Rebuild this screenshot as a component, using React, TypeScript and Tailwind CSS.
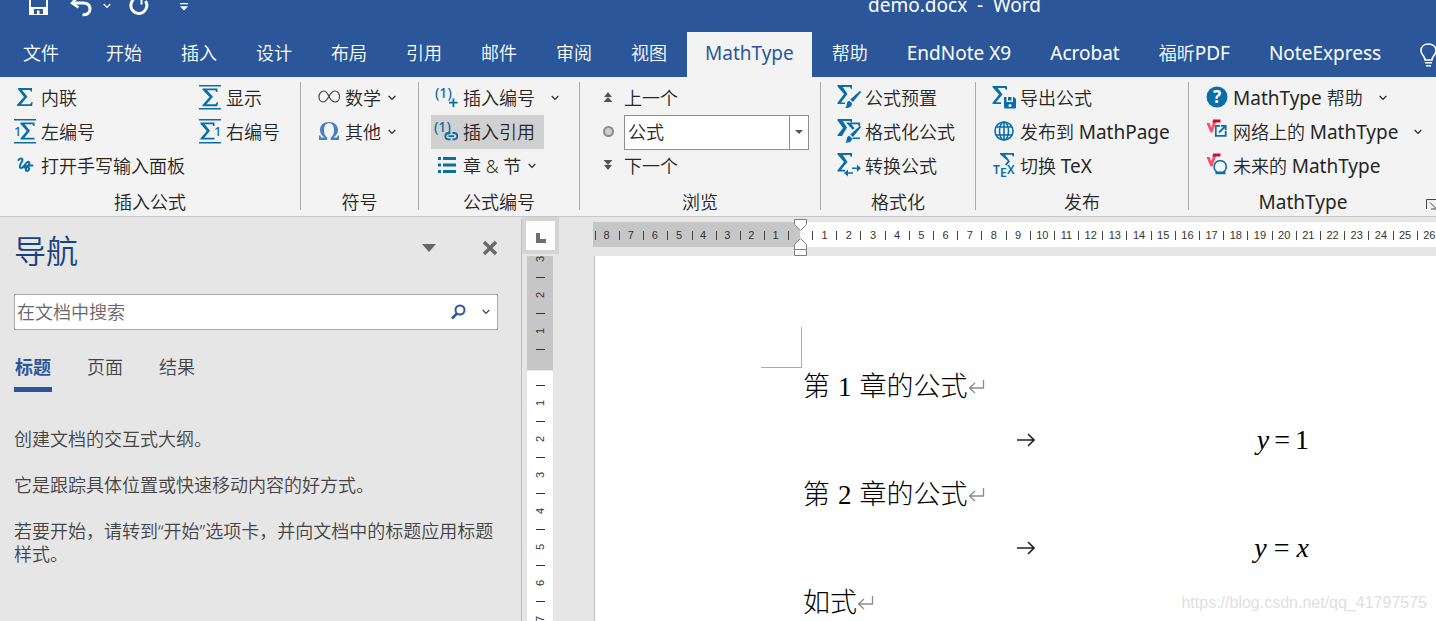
import { Fragment, type ReactNode } from "react";
import clsx from "clsx";

const BLUE = "#0a6ea8";

const tabs = [
  "开始",
  "插入",
  "设计",
  "布局",
  "引用",
  "邮件",
  "审阅",
  "视图",
  "MathType",
  "帮助",
  "EndNote X9",
  "Acrobat",
  "福昕PDF",
  "NoteExpress",
];

const marginNumbers = [8, 7, 6, 5, 4, 3, 2, 1];
const textNumbers = Array.from({ length: 26 }, (_, i) => i + 1);

function Icon({ children }: { children: ReactNode }) {
  return (
    <svg width="24" height="24" viewBox="0 0 24 24" className="shrink-0 overflow-visible" fill={BLUE} aria-hidden="true">
      {children}
    </svg>
  );
}

function Chevron({ className }: { className?: string }) {
  return (
    <svg width="8" height="6" viewBox="0 0 8 6" fill="none" stroke="currentColor" strokeWidth="1.2" className={clsx("shrink-0", className)} aria-hidden="true">
      <path d="M.7 1 4 4.3 7.3 1" />
    </svg>
  );
}

const SIGMA = "M5 2h14v3.5h-1.2L17 4H9l5.5 6.8L8 18.2h9.2l1.3-2.2h1.3L19 20H4v-1.2l7-7.8-6-7.8z";
const SMALL_SIGMA = "M0 0h14v3.6h-1.2L12 1.8H4.2l5.3 6.4-5.6 7H14V17H0v-1.2L6.3 8.6 0 1.4z";

const InlineIcon = () => (
  <Icon>
    <path d={SIGMA} />
  </Icon>
);

const DisplayIcon = () => (
  <Icon>
    <path d="M1-1h22V.5H1zM1 22h22v1.500H1z" />
    <path d="M4.500 2.500h15V6h-1.300l-.8-1.700H9l6 6.400-6.500 7.500h9l1.300-2h1.300l-.8 4H4.500V19l7-8-7-7.300z" />
  </Icon>
);

const LeftNumberIcon = () => (
  <Icon>
    <path d="M1-1h22V.5H1zM1 22h22v1.500H1z" />
    <path transform="translate(7.500 2.500)" d={SMALL_SIGMA} />
    <text x="1" y="15.500" fontSize="13" fontWeight="500">1</text>
  </Icon>
);

const RightNumberIcon = () => (
  <Icon>
    <path d="M1-1h22V.5H1zM1 22h22v1.500H1z" />
    <path transform="translate(2.500 2.500)" d={SMALL_SIGMA} />
    <text x="16" y="15.500" fontSize="13" fontWeight="500">1</text>
  </Icon>
);

const HandwritingIcon = () => (
  <Icon>
    <path
      d="M5.500 6C8 3.500 10.500 4.500 9 7.500c-1.500 2.500-3.500 5-1.500 6.500 3 1 4.500-4.500 7-6 2-.8 2.500 1 1 3-1.500 2-3.500 3.500-2.500 5.500 2 1.500 4-1.500 2.500-3.500-1-1.300-3.500-1-4 .5M15.500 11.500h4"
      fill="none"
      stroke={BLUE}
      strokeWidth="2"
      strokeLinecap="round"
    />
  </Icon>
);

const InfinityIcon = () => (
  <Icon>
    <path
      d="M12 10.500C10.500 7 9 5 6.500 5 4 5 2 7.800 2 10.800c0 2.800 1.700 5.200 4 5.200 5.500 0 6-11 12-11 2.500 0 4.500 2.500 4.500 5.500S20.700 16 18.200 16c-3 0-4.700-2.500-6.200-5.500z"
      fill="none"
      stroke="#444"
      strokeWidth="1.200"
    />
  </Icon>
);

const OmegaIcon = () => (
  <Icon>
    <path
      fill="#4a80bd"
      d="M2 20v-4.500h1.300l.7 2h3.500C4.300 15.300 3 13 3 10c0-4.700 3.500-8 9-8s9 3.300 9 8c0 3-1.300 5.300-4.500 7.500H20l.7-2H22V20h-8.200v-2.500c2.200-1.400 3.200-4 3.200-7.500 0-4.200-1.800-6.700-5-6.700S7 5.800 7 10c0 3.600 1 6.100 3.200 7.500V20z"
    />
  </Icon>
);

const NumberPlusIcon = () => (
  <Icon>
    <text x="0" y="12" fontSize="14" fontWeight="500">(1)</text>
    <path d="M17.500 12.500h1.800v3.300h3.400v1.800h-3.400V21h-1.800v-3.400H14v-1.800h3.500z" />
  </Icon>
);

const NumberLinkIcon = () => (
  <Icon>
    <text x="-1" y="12" fontSize="14" fontWeight="500">(1)</text>
    <g fill="none" stroke={BLUE} strokeWidth="1.800">
      <path d="M15.500 13h-2a3.200 3.200 0 0 0 0 6.400h2M17.500 13h1.500a3.200 3.200 0 0 1 0 6.400h-1.500M13.500 16.200h5.500" />
    </g>
  </Icon>
);

const ListIcon = () => (
  <Icon>
    <path d="M3 3h3v3H3zM8 3h13v3H8zM3 9.500h3v3H3zM8 9.500h13v3H8zM3 16h3v3H3zM8 16h13v3H8z" />
  </Icon>
);

const PreviousIcon = () => (
  <Icon>
    <path fill="#555" d="M12 6l4 5H8zM12 11l4.500 5h-9z" />
  </Icon>
);

const TargetIcon = () => (
  <Icon>
    <circle cx="12.500" cy="11.500" r="4.500" fill="#cdcdcd" stroke="#8a8a8a" strokeWidth="2" />
  </Icon>
);

const NextIcon = () => (
  <Icon>
    <path fill="#555" d="M7.500 6h9L12 11zM8 11h8l-4 5z" />
  </Icon>
);

const PresetIcon = () => (
  <Icon>
    <path d="M.5-1H15v3.800h-1.300L13 .9H5.800l4.700 7L4 16.500h4V18H.5v-1.300L7 8 .5.500z" />
    <path d="M22.500 5.200c1.200-.8 2 .4 1.200 1.400L16 16l-2.800-2.500zM12.300 14.800l2.700 2.400c0 3-2 5-7 4.800 2-1.500 1.300-3 2-5 .5-1.300 1.300-2 2.300-2.200z" />
  </Icon>
);

const FormatIcon = () => (
  <Icon>
    <path d="M.5-1H15v3h-1.300L13 .9H5.800L10 7.500 5 16H.5v-1L6 8 .5.500z" />
    <path d="M9 2.500h14V6h-1.200L21 4.200h-6.500l3 4-1.800 1.600zM16 17.500h7V19h-8z" />
    <path d="M22.500 6.200c1.200-.8 2 .4 1.200 1.400L16 17l-2.800-2.500zM12.300 15.800l2.700 2.400c0 3-2 5-7 4.300 2-1 1.300-2.500 2-4.500.5-1.300 1.300-2 2.300-2.200z" />
  </Icon>
);

const ConvertIcon = () => (
  <Icon>
    <path d="M.5-1H15v3.800h-1.300L13 .9H5.800l4.700 7L4 15.800h4v1.700H.5v-1.300L7 8 .5.500z" />
    <path d="M15 13.500h5v-2.700l4 3.500-4 3.500v-2.700h-5zM16 18.200h-5v-2.700L7 19l4 3.500v-2.700h5z" />
  </Icon>
);

const ExportIcon = () => (
  <Icon>
    <path d="M.5 0H15v3.800h-1.300L13 1.900H5.800l4.700 6.600L4 16.300h5V18H.5v-1.300L7 8.600.5 1.300z" />
    <path d="M12 11h2.500v5H21v-5h1l2 2v8.500a1 1 0 0 1-1 1H13a1 1 0 0 1-1-1z" />
    <path d="M16 11h3.500v3.500H16z" />
    <circle cx="18" cy="19.500" r="1.500" fill="#f3f3f3" />
  </Icon>
);

const GlobeIcon = () => (
  <Icon>
    <g fill="none" stroke={BLUE} strokeWidth="1.600">
      <circle cx="12" cy="11" r="9" />
      <ellipse cx="12" cy="11" rx="4.500" ry="9" />
      <path d="M12 2v18M4 7h16M4 15h16" />
    </g>
  </Icon>
);

const TexIcon = () => (
  <Icon>
    <path d="M8-1h14v3.500h-1.200L20 .7h-7l5 6.800-3.500 4-1.500-1 2.800-3.500L8 .3z" />
    <text x="1" y="20" fontSize="12" fontWeight="600">T</text>
    <text x="8" y="23" fontSize="12" fontWeight="600">E</text>
    <text x="15" y="20" fontSize="12" fontWeight="600">X</text>
  </Icon>
);

const HelpIcon = () => (
  <Icon>
    <circle cx="12" cy="11" r="10.500" />
    <text x="12" y="17" fontSize="17" fontWeight="700" fill="#fff" textAnchor="middle">?</text>
  </Icon>
);

function RootSign() {
  return (
    <>
      <path fill="#f5506a" d="M1.500 3h3l2 4.500 1.500-5.500h3L7.500 12.500h-2z" />
      <path fill="#c8102e" d="M8-.5h7.500V2.500H7.500z" />
    </>
  );
}

const WebIcon = () => (
  <Icon>
    <RootSign />
    <path d="M15 5.800h-4.200v10h9.900V11" fill="none" stroke={BLUE} strokeWidth="1.800" />
    <path d="M14 12.500l6-6M16 5.800h4.700v4.500" fill="none" stroke={BLUE} strokeWidth="1.800" />
  </Icon>
);

const FutureIcon = () => (
  <Icon>
    <RootSign />
    <path d="M12 18.200c-5-4-3-11.400 3.200-11.400s8.200 7.400 3.200 11.400" fill="none" stroke={BLUE} strokeWidth="1.600" />
    <path d="M10.500 17.500h10v2.700h-10z" />
  </Icon>
);

// Latin runs are a pixel larger and a touch heavier than the Chinese text around them.
function Label({ text }: { text: string }) {
  return (
    <span className="whitespace-pre">
      {text.split(/([A-Za-z][A-Za-z0-9 ]*)/).map((part, i) =>
        i % 2 ? (
          <span key={i} className="text-[19px] font-normal">
            {part}
          </span>
        ) : (
          <Fragment key={i}>{part}</Fragment>
        ),
      )}
    </span>
  );
}

function Command({
  icon,
  label,
  menu,
  active,
}: {
  icon: ReactNode;
  label: string;
  menu?: "near" | "far";
  active?: boolean;
}) {
  return (
    <button
      type="button"
      className={clsx(
        "flex h-[34px] items-center gap-1 pl-1 pr-[9px] text-left leading-6",
        active ? "bg-[#d0d0d0]" : "hover:bg-[#dcdcdc]",
      )}
    >
      {icon}
      <Label text={label} />
      {menu && <Chevron className={menu === "far" ? "ml-3" : "ml-[3px]"} />}
    </button>
  );
}

function Group({ title, className, children }: { title: string; className: string; children: ReactNode }) {
  return (
    <section className={clsx("flex shrink-0 flex-col pt-1", className)}>
      <div className="flex h-[109px] flex-col items-start pl-3">{children}</div>
      <h2 className="text-center leading-6">
        <Label text={title} />
      </h2>
    </section>
  );
}

function Separator() {
  return <div className="mb-1.5 mt-[5px] w-px shrink-0 bg-[#ababab]" />;
}

function TitleBar() {
  return (
    <header className="flex h-8 items-start text-white">
      <button type="button" aria-label="保存" className="ml-[29px]">
        <svg width="19" height="15" viewBox="0 0 19 15" fill="#fff">
          <path d="M0 0h2v7h15V0h2v15h-5V9H5v6H0z" />
          <path d="M8 10.500h2.500V14H8zM5 14h9v1H5z" />
        </svg>
      </button>
      <button type="button" aria-label="撤消" className="ml-[22px]">
        <svg width="23" height="17" viewBox="0 0 23 17" fill="none" stroke="#fff" strokeWidth="3">
          <path d="M2 3h11c5 0 7 2.500 7 6 0 4-3 6-7.500 5.800" />
          <path d="M8-3 2 3l6.500 4.500" strokeWidth="2.500" />
        </svg>
      </button>
      <button type="button" aria-label="撤消列表" className="ml-2.5 pt-[3px]">
        <Chevron />
      </button>
      <button type="button" aria-label="重复" className="ml-[18px]">
        <svg width="20" height="17" viewBox="0 0 20 17" fill="none" stroke="#fff" strokeWidth="3">
          <path d="M4.500-.5A8 8 0 1 0 16.500 1" />
          <path d="M12.500 4.500V-1" strokeWidth="2" />
        </svg>
      </button>
      <button type="button" aria-label="自定义快速访问工具栏" className="ml-[31px] pt-[3px]">
        <svg width="8" height="8" viewBox="0 0 8 8" fill="#fff">
          <path d="M0 0h8v1.200H0zM0 3.200h8L4 7.500z" />
        </svg>
      </button>
      <h1 className="ml-auto mr-[395px] whitespace-pre text-[19px] font-normal leading-[10px]">demo.docx  -  Word</h1>
    </header>
  );
}

function TabStrip() {
  return (
    <nav className="flex h-[45px] gap-px overflow-hidden text-white">
      <button type="button" className="w-[86px] shrink-0 pb-[3px] pr-1">
        文件
      </button>
      {tabs.map((tab) => (
        <button
          key={tab}
          type="button"
          className={clsx(
            "shrink-0 pb-[3px] leading-6",
            tab === "MathType" ? "bg-[#f3f3f3] px-[18px] text-[#2b579a]" : "px-[19px]",
          )}
        >
          <Label text={tab} />
        </button>
      ))}
      <button type="button" aria-label="操作说明搜索" className="ml-[19px] shrink-0">
        <svg width="18" height="24" viewBox="0 0 18 24" fill="none" stroke="#fff" strokeWidth="1.600">
          <path d="M5 17c0-4-4-5-4-9.500C1 3.500 4.300 1 8.500 1S16 3.500 16 7.500c0 4.500-4 5.500-4 9.500zM5 19.800h7M6 22.800h5" />
        </svg>
      </button>
    </nav>
  );
}

function Ribbon() {
  return (
    <div className="flex h-[140px] overflow-hidden border-b border-[#c8c8c8] bg-[#f3f3f3] text-[#262626]">
      <Group title="插入公式" className="w-[300px]">
        <div className="-ml-[3px] grid grid-cols-[185px_auto] justify-items-start">
          <Command icon={<InlineIcon />} label="内联" />
          <Command icon={<DisplayIcon />} label="显示" />
          <Command icon={<LeftNumberIcon />} label="左编号" />
          <Command icon={<RightNumberIcon />} label="右编号" />
          <div className="col-span-2">
            <Command icon={<HandwritingIcon />} label="打开手写输入面板" />
          </div>
        </div>
      </Group>
      <Separator />
      <Group title="符号" className="w-[117px]">
        <Command icon={<InfinityIcon />} label="数学" menu="near" />
        <Command icon={<OmegaIcon />} label="其他" menu="near" />
      </Group>
      <Separator />
      <Group title="公式编号" className="w-[160px]">
        <Command icon={<NumberPlusIcon />} label="插入编号" menu="far" />
        <Command icon={<NumberLinkIcon />} label="插入引用" active />
        <Command icon={<ListIcon />} label="章 & 节" menu="near" />
      </Group>
      <Separator />
      <Group title="浏览" className="w-[240px]">
        <Command icon={<PreviousIcon />} label="上一个" />
        <label className="flex h-[34px] items-center gap-1 pl-1">
          <TargetIcon />
          <span className="relative">
            <select
              aria-label="浏览对象"
              className="block h-[35px] w-[185px] appearance-none border border-[#8f8f8f] bg-white pl-[3px] leading-6"
            >
              <option>公式</option>
              <option>公式编号</option>
            </select>
            <span className="pointer-events-none absolute inset-y-0 right-0 flex w-5 items-center justify-center border-x border-[#8f8f8f]">
              <svg width="8" height="4" viewBox="0 0 8 4" fill="#555">
                <path d="M0 0h8L4 4z" />
              </svg>
            </span>
          </span>
        </label>
        <Command icon={<NextIcon />} label="下一个" />
      </Group>
      <Separator />
      <Group title="格式化" className="w-[154px]">
        <Command icon={<PresetIcon />} label="公式预置" />
        <Command icon={<FormatIcon />} label="格式化公式" />
        <Command icon={<ConvertIcon />} label="转换公式" />
      </Group>
      <Separator />
      <Group title="发布" className="w-[212px]">
        <Command icon={<ExportIcon />} label="导出公式" />
        <Command icon={<GlobeIcon />} label="发布到 MathPage" />
        <Command icon={<TexIcon />} label="切换 TeX" />
      </Group>
      <Separator />
      <Group title="MathType" className="w-[228px]">
        <Command icon={<HelpIcon />} label="MathType 帮助" menu="far" />
        <Command icon={<WebIcon />} label="网络上的 MathType" menu="far" />
        <Command icon={<FutureIcon />} label="未来的 MathType" />
      </Group>
      <button type="button" aria-label="MathType 选项" className="mb-1.5 ml-[9px] shrink-0 self-end">
        <svg width="12" height="11" viewBox="0 0 12 11" fill="none" stroke="#444">
          <path d="M.5 10V.5H12M4 3.500l6 6M5 10h5.500V5" />
        </svg>
      </button>
    </div>
  );
}

function NavigationPane() {
  return (
    <aside className="mt-0.5 w-[522px] shrink-0 border-r border-[#bdbdbd] pl-3.5 pr-[23px] text-[#444]">
      <div className="flex h-16 items-center text-[#174480]">
        <h2 className="text-[32px]">导航</h2>
        <button type="button" aria-label="任务窗格选项" className="ml-auto pb-1.5">
          <svg width="14" height="8" viewBox="0 0 14 8" fill="#666">
            <path d="M0 0h14L7 8z" />
          </svg>
        </button>
        <button type="button" aria-label="关闭" className="ml-[46px] pb-1.5">
          <svg width="16" height="16" viewBox="0 0 16 16" stroke="#6a6a6a" strokeWidth="3.500">
            <path d="M2 2l12 12M14 2 2 14" />
          </svg>
        </button>
      </div>
      <div className="mt-[11px] flex h-9 items-center border border-[#ababab] bg-white pl-0.5 pr-[7px]">
        <input
          type="text"
          aria-label="在文档中搜索"
          placeholder="在文档中搜索"
          className="min-w-0 flex-1 outline-none placeholder:text-[#666]"
        />
        <button type="button" aria-label="搜索">
          <svg width="16" height="16" viewBox="0 0 16 16" fill="none" stroke="#2b579a" strokeWidth="2">
            <circle cx="10" cy="6" r="4.500" />
            <path d="M7 9.500 2 14.500" strokeWidth="2.500" />
          </svg>
        </button>
        <button type="button" aria-label="搜索选项" className="ml-4">
          <Chevron />
        </button>
      </div>
      <div role="tablist" className="mt-5 flex gap-[34px] leading-7">
        <button
          type="button"
          role="tab"
          aria-selected
          className="h-[42px] w-[38px] border-b-[5px] border-[#2b579a] pb-1 font-bold text-[#2b579a]"
        >
          标题
        </button>
        <button type="button" role="tab" className="h-[37px] w-[38px] pb-1">
          页面
        </button>
        <button type="button" role="tab" className="h-[37px] w-[38px] pb-1">
          结果
        </button>
      </div>
      <div className="mt-9 space-y-[23px] leading-[23px]">
        <p>创建文档的交互式大纲。</p>
        <p>它是跟踪具体位置或快速移动内容的好方式。</p>
        <p>若要开始，请转到“开始”选项卡，并向文档中的标题应用标题样式。</p>
      </div>
    </aside>
  );
}

function HorizontalRuler() {
  return (
    <div className="relative ml-[34px] mt-[5px] flex h-[25px] min-w-0 flex-1 font-['Liberation_Sans',sans-serif] text-[11px] font-normal text-[#333]">
      <div className="flex w-[207px] shrink-0 items-center bg-[#c6c6c6] pl-0.5 pt-px">
        <div className="flex w-[194px] border-r border-[#444]">
          {marginNumbers.map((n) => (
            <span key={n} className="h-[9px] flex-1 border-l border-[#444] pr-0.5 text-center leading-[9px]">
              {n}
            </span>
          ))}
        </div>
      </div>
      <div className="flex min-w-0 flex-1 items-center overflow-hidden bg-white pl-3 pt-px">
        <div className="flex w-[629px] shrink-0">
          {textNumbers.map((n) => (
            <span key={n} className="h-[9px] w-0 flex-1 border-l border-[#444] text-center leading-[9px]">
              {n}
            </span>
          ))}
        </div>
      </div>
      {/* indent markers sit over the zero point */}
      <svg width="13" height="37" viewBox="0 0 13 37" className="absolute -top-[3px] left-[201px]" fill="#fff" stroke="#808080">
        <path d="M.5.500h12v5l-6 6-6-6zM.5 30.500v-5l6-6 6 6v5zM.5 30.500h12v6H.5z" />
      </svg>
    </div>
  );
}

function RulerMark({ value }: { value?: number }) {
  return (
    <span className="flex h-[18px] w-full shrink-0 items-center justify-center">
      {value ? <span className="-rotate-90">{value}</span> : <span className="h-px w-[9px] bg-[#333]" />}
    </span>
  );
}

function VerticalRuler() {
  return (
    <div className="ml-[5px] flex w-[26px] shrink-0 flex-col overflow-hidden font-['Liberation_Sans',sans-serif] text-[11px] font-normal leading-[18px] text-[#333]">
      <div className="flex h-[114px] shrink-0 flex-col justify-end overflow-hidden bg-[#c6c6c6] pb-3">
        {[3, 2, 1].map((n) => (
          <Fragment key={n}>
            <RulerMark value={n} />
            <RulerMark />
          </Fragment>
        ))}
      </div>
      <div className="mt-px flex min-h-0 flex-1 flex-col overflow-hidden bg-white pt-[5px]">
        {[1, 2, 3, 4, 5, 6, 7].map((n) => (
          <Fragment key={n}>
            <RulerMark />
            <RulerMark value={n} />
          </Fragment>
        ))}
      </div>
    </div>
  );
}

function ParagraphMark() {
  return (
    <svg width="17" height="14" viewBox="0 0 17 14" fill="none" stroke="#8c8c8c" strokeWidth="1.300" className="shrink-0" aria-hidden="true">
      <path d="M15.500 0v8H2M7 3 1.500 8 7 13" />
    </svg>
  );
}

function Chapter({ number }: { number: number }) {
  return (
    <p className="flex h-[54px] items-center">
      <span>
        第<span className="mx-2">{number}</span>章的公式
      </span>
      <ParagraphMark />
    </p>
  );
}

function Equation({ children }: { children: ReactNode }) {
  return (
    <div className="flex h-[54px] w-[506px] items-center justify-between pb-0.5 pl-[214px]">
      <svg width="18" height="14" viewBox="0 0 18 14" fill="none" stroke="#222" strokeWidth="1.600" aria-hidden="true">
        <path d="M0 7h16.500M11 1l6 6-6 6" />
      </svg>
      <span className="text-[28px]">{children}</span>
    </div>
  );
}

function DocumentPage() {
  return (
    <main className="relative ml-[41px] min-w-0 flex-1 overflow-hidden border-l border-[#c0c0c0] bg-white pl-[208px] pt-[104px] font-['Liberation_Serif','Noto_Sans_CJK_SC',serif] text-[27px] font-light text-black">
      <div className="absolute left-[166px] top-[71px] size-[41px] border-b border-r border-[#ababab]" />
      <Chapter number={1} />
      <Equation>
        <i>y</i>
        <span className="mx-[5px]">=</span>1
      </Equation>
      <Chapter number={2} />
      <Equation>
        <i>y</i>
        <span className="mx-[7px]">=</span>
        <i>x</i>
      </Equation>
      <p className="flex h-[54px] items-center">
        如式
        <ParagraphMark />
      </p>
      <span className="absolute bottom-2 right-[9px] font-['Liberation_Sans',sans-serif] text-base font-normal leading-5 text-[#e0e0e0]">
        https://blog.csdn.net/qq_41797575
      </span>
    </main>
  );
}

export default function App() {
  return (
    <div className="flex h-screen flex-col overflow-hidden bg-[#e6e6e6] font-['Noto_Sans','Noto_Sans_CJK_SC',sans-serif] text-lg font-[350]">
      <div className="shrink-0 bg-[#2b579a]">
        <TitleBar />
        <TabStrip />
      </div>
      <div className="shrink-0">
        <Ribbon />
      </div>
      <div className="flex min-h-0 flex-1">
        <NavigationPane />
        <div className="flex min-w-0 flex-1 flex-col">
          <div className="flex h-[39px] shrink-0 items-start">
            <button
              type="button"
              aria-label="制表符"
              className="flex size-[37px] shrink-0 items-center justify-center border-4 border-[#d4d4d4] bg-[#fdfdfd]"
            >
              <svg width="10" height="10" viewBox="0 0 10 10" fill="#6e6e6e" className="mt-1">
                <path d="M0 0h4v6h6v4H0z" />
              </svg>
            </button>
            <HorizontalRuler />
          </div>
          <div className="flex min-h-0 flex-1">
            <VerticalRuler />
            <DocumentPage />
          </div>
        </div>
      </div>
    </div>
  );
}
